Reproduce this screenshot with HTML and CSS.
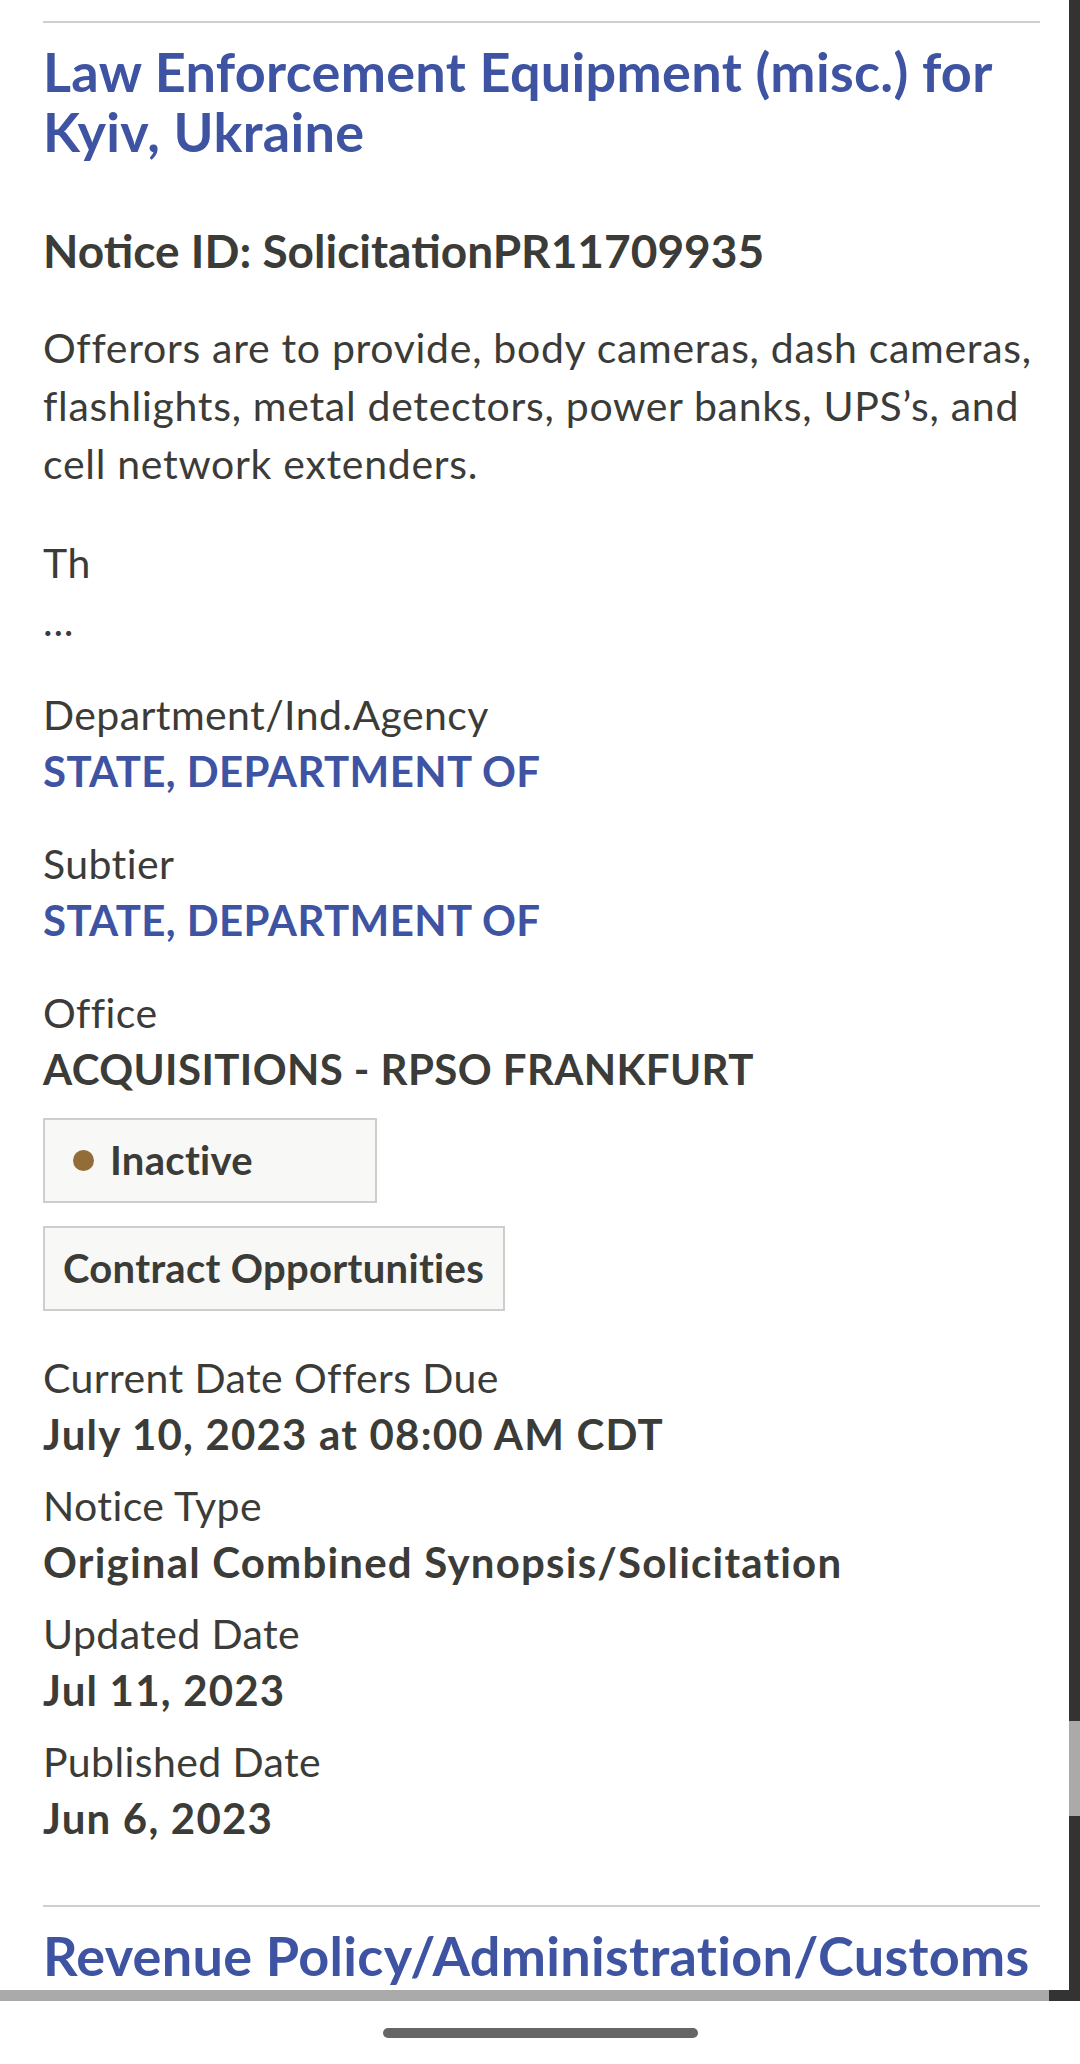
FILE: index.html
```html
<!DOCTYPE html>
<html>
<head>
  <title>Contract Opportunities - Search Results</title>
  <link rel="stylesheet" href="styles.css">
</head>
<body>
  <div class="screen">
    <div class="viewport">
      <main class="results">
        <article class="result">
          <h2 class="title"><a href="#">Law Enforcement Equipment (misc.) for Kyiv, Ukraine</a></h2>
          <h3 class="notice-id">Notice ID: SolicitationPR11709935</h3>
          <div class="desc">
            <p>Offerors are to provide, body cameras, dash cameras, flashlights, metal detectors, power banks, UPS’s, and cell network extenders.</p>
            <p>Th</p>
            <div class="more">...</div>
          </div>

          <div class="org">
            <div class="field">
              <div class="label">Department/Ind.Agency</div>
              <div class="value"><a href="#">STATE, DEPARTMENT OF</a></div>
            </div>
            <div class="field">
              <div class="label">Subtier</div>
              <div class="value"><a href="#">STATE, DEPARTMENT OF</a></div>
            </div>
            <div class="field">
              <div class="label">Office</div>
              <div class="value">ACQUISITIONS - RPSO FRANKFURT</div>
            </div>
          </div>

          <div class="tags">
            <span class="tag status"><span class="dot"></span>Inactive</span>
            <span class="tag">Contract Opportunities</span>
          </div>

          <div class="dates">
            <div class="date">
              <div class="label">Current Date Offers Due</div>
              <div class="value">July 10, 2023 at 08:00 AM CDT</div>
            </div>
            <div class="date">
              <div class="label">Notice Type</div>
              <div class="value">Original Combined Synopsis/Solicitation</div>
            </div>
            <div class="date">
              <div class="label">Updated Date</div>
              <div class="value">Jul 11, 2023</div>
            </div>
            <div class="date">
              <div class="label">Published Date</div>
              <div class="value">Jun 6, 2023</div>
            </div>
          </div>
        </article>

        <article class="result">
          <h2 class="title"><a href="#">Revenue Policy/Administration/Customs</a></h2>
        </article>
      </main>
      <div class="vscroll"><div class="vthumb"></div></div>
    </div>
    <div class="hscroll">
      <div class="hthumb"></div>
      <div class="corner"></div>
    </div>
    <div class="navbar"><div class="pill"></div></div>
  </div>
</body>
</html>
```

FILE: styles.css
```css
body {
  margin: 0;
  background: #fff;
  font-family: Lato, "Open Sans", sans-serif;
  color: #3b3b38;
}
a {
  color: #3e54a3;
  text-decoration: none;
}

.screen {
  width: 1080px;
  height: 2064px;
  display: flex;
  flex-direction: column;
}
.viewport {
  height: 1990px;
  display: flex;
  overflow: hidden;
}
.results {
  flex: 1;
  padding: 21px 29px 0 43px;
  overflow: hidden;
}

/* one search result */
.result {
  border-top: 2px solid #cfcfcf;
  padding-bottom: 59px;
}
.title {
  font-size: 54px;
  line-height: 60px;
  font-weight: 700;
  letter-spacing: 0.3px;
  margin: 19px 0 0;
}
.notice-id {
  font-size: 46px;
  line-height: 56px;
  font-weight: 700;
  margin: 61px 0 0;
}
.desc {
  font-size: 41px;
  line-height: 58px;
  letter-spacing: 0.7px;
  margin-top: 40px;
}
.desc p {
  margin: 0 0 41px;
}
.desc .more {
  margin-top: -41px;
}

.field {
  margin-top: 37px;
}
.label {
  font-size: 41px;
  line-height: 56px;
  letter-spacing: 0.4px;
}
.value {
  font-size: 42px;
  line-height: 56px;
  font-weight: 700;
  letter-spacing: 0.4px;
}
.dates .value {
  letter-spacing: 1.2px;
}

.tags {
  display: flex;
  flex-direction: column;
  align-items: flex-start;
  gap: 23px;
  margin-top: 21px;
}
.tag {
  display: flex;
  align-items: center;
  border: 2px solid #cdcdcd;
  background: #f8f8f6;
  font-size: 40px;
  font-weight: 700;
  letter-spacing: 0.3px;
  line-height: 56px;
  padding: 12px 19px 13px 18px;
}
.tag.status {
  width: 334px;
  box-sizing: border-box;
  padding-left: 28px;
}
.dot {
  width: 21px;
  height: 21px;
  border-radius: 50%;
  background: #936d37;
  margin-right: 16px;
}

.dates {
  display: flex;
  flex-direction: column;
  gap: 16px;
  margin-top: 39px;
}

/* scrollbars and phone chrome */
.vscroll {
  width: 11px;
  background: #333;
}
.vthumb {
  margin-top: 1721px;
  height: 95px;
  background: #aaa;
}
.hscroll {
  height: 11px;
  display: flex;
}
.hthumb {
  flex: 1;
  background: #aaa;
}
.corner {
  width: 31px;
  background: #333;
}
.navbar {
  flex: 1;
  display: flex;
  justify-content: center;
  padding-top: 27px;
}
.pill {
  width: 315px;
  height: 10px;
  border-radius: 5px;
  background: #666;
}
```
